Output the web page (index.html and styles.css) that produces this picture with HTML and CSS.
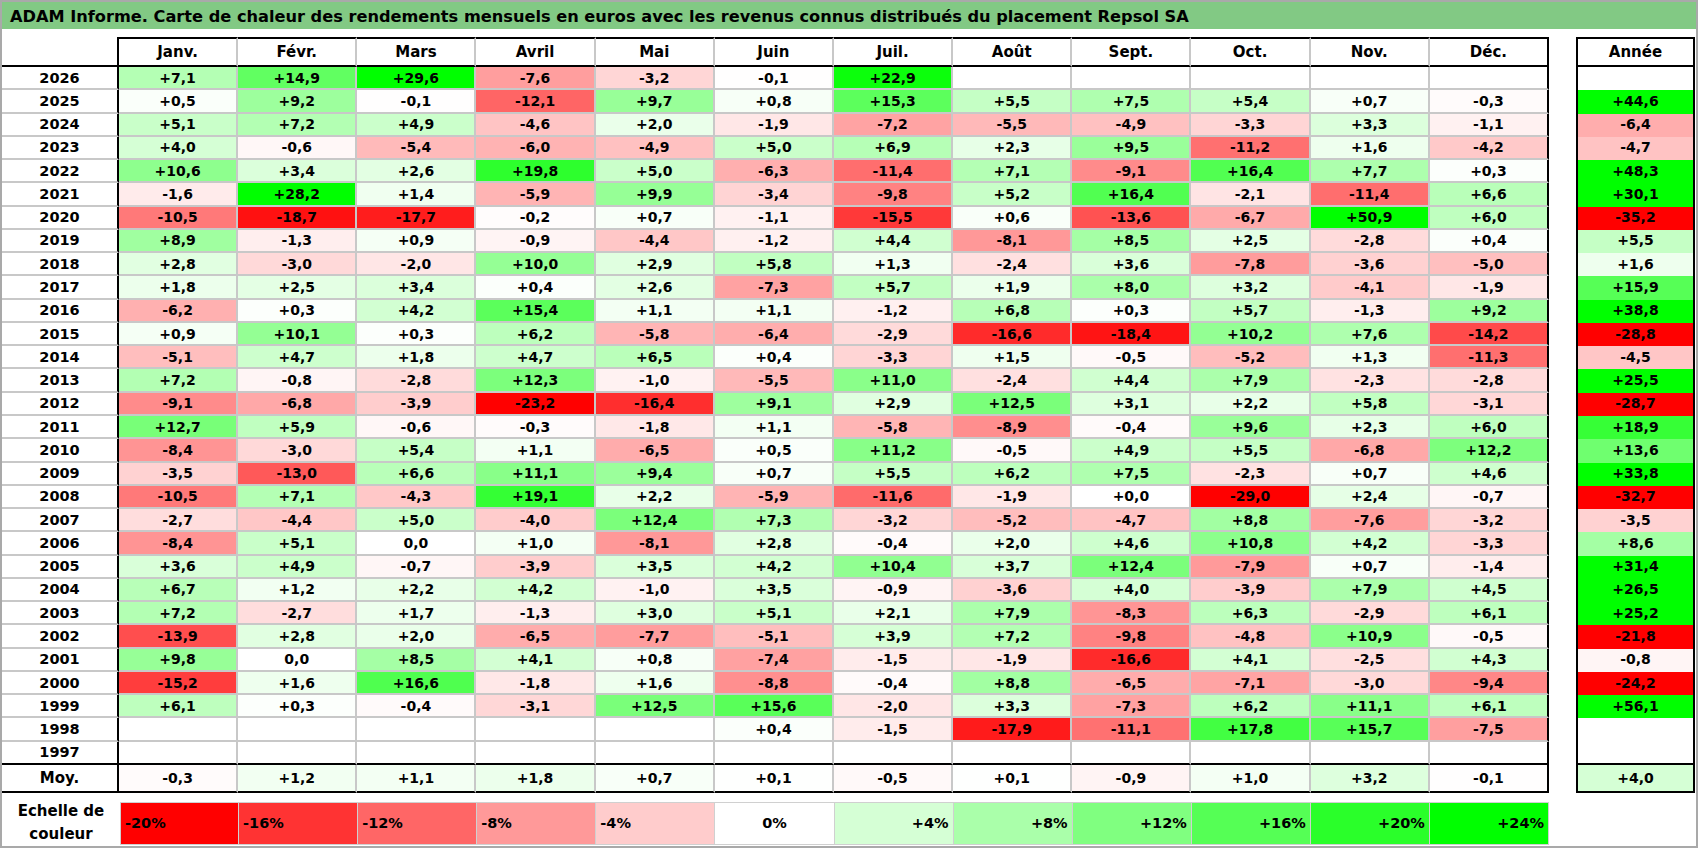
FILE: index.html
```html
<!DOCTYPE html>
<html lang="fr">
<head>
<meta charset="utf-8">
<title>ADAM Informe - Repsol SA</title>
<link rel="stylesheet" href="styles.css">
</head>
<body>
<div class="frame">
  <div class="title">ADAM Informe. Carte de chaleur des rendements mensuels en euros avec les revenus connus distribués du placement Repsol SA</div>
  <div class="main">
    <div class="table" id="tbl"></div>
    <div class="yearcol" id="ycol"></div>
  </div>
  <div class="scale">
    <div class="scale-label">Echelle de<br>couleur</div>
    <div class="scale-cells" id="scale"></div>
  </div>
</div>
<script src="script.js"></script>
</body>
</html>
```

FILE: styles.css
```css
* { box-sizing: border-box; }
html, body { margin: 0; padding: 0; background: #fff; }
body {
  font-family: "DejaVu Sans", "Verdana", sans-serif;
  font-weight: bold;
  color: #000;
}
.frame {
  width: 1698px;
  height: 848px;
  border: 2px solid #a9a9a9;
  display: flex;
  flex-direction: column;
  overflow: hidden;
}
.title {
  height: 27px;
  background: #82c984;
  font-size: 16.2px;
  line-height: 22px;
  padding: 4px 0 0 8px;
  white-space: nowrap;
}
.main {
  display: flex;
  margin-top: 8px;
}
.table {
  width: 1547px;
  display: grid;
  grid-template-columns: 117px repeat(12, 1fr);
  grid-template-rows: 30px repeat(30, 23.27px) 28px;
}
.yearcol {
  margin-left: 27px;
  width: 119px;
  display: grid;
  grid-template-rows: 30px repeat(30, 23.27px) 28px;
  border-left: 2px solid #000;
  border-right: 2px solid #000;
}
.c {
  display: flex;
  align-items: center;
  justify-content: center;
  font-size: 14px;
  border-right: 2px solid #c8c8c8;
  border-bottom: 2px solid #c8c8c8;
  white-space: nowrap;
}
.c.yl { border-right-color: #000; font-size: 14.5px; }
.c.hd { border-top: 2px solid #000; border-bottom-color: #000; font-size: 15px; }
.c.hd0 { border-bottom-color: #000; border-right-color: #000; }
.c.last { border-right-color: #000; }
.c.endrow { border-bottom-color: #000; }
.c.moy { border-bottom-color: #000; }
.c.moylabel { font-size: 15px; }
.c.inv { color: #fff; }
.y {
  display: flex;
  align-items: center;
  justify-content: center;
  font-size: 14px;
  padding-bottom: 2px;
}
.y.hd { border-top: 2px solid #000; border-bottom: 2px solid #000; padding-bottom: 0; font-size: 15px; }
.y.endrow { border-bottom: 2px solid #000; padding-bottom: 0; }
.y.moy { border-bottom: 2px solid #000; padding-bottom: 0; }
.scale {
  display: flex;
  margin-top: 9px;
  height: 43px;
}
.scale-label {
  width: 118px;
  font-size: 15px;
  line-height: 23px;
  text-align: center;
  display: flex;
  align-items: center;
  justify-content: center;
}
.scale-cells {
  width: 1429px;
  display: grid;
  grid-template-columns: repeat(12, 1fr);
}
.s {
  display: flex;
  align-items: center;
  padding: 0 4px;
  font-size: 14.5px;
  border: 1px solid #d0d0d0;
  border-left: none;
}
.s:first-child { border-left: 1px solid #d0d0d0; }
.s.neg { justify-content: flex-start; }
.s.zero { justify-content: center; }
.s.pos { justify-content: flex-end; }
```

FILE: script.js
```js
(function () {
  var months = ["Janv.", "Févr.", "Mars", "Avril", "Mai", "Juin", "Juil.", "Août", "Sept.", "Oct.", "Nov.", "Déc."];
  var rows = [
    ["2026", "+7,1 +14,9 +29,6 -7,6 -3,2 -0,1 +22,9 _ _ _ _ _", "_"],
    ["2025", "+0,5 +9,2 -0,1 -12,1 +9,7 +0,8 +15,3 +5,5 +7,5 +5,4 +0,7 -0,3", "+44,6"],
    ["2024", "+5,1 +7,2 +4,9 -4,6 +2,0 -1,9 -7,2 -5,5 -4,9 -3,3 +3,3 -1,1", "-6,4"],
    ["2023", "+4,0 -0,6 -5,4 -6,0 -4,9 +5,0 +6,9 +2,3 +9,5 -11,2 +1,6 -4,2", "-4,7"],
    ["2022", "+10,6 +3,4 +2,6 +19,8 +5,0 -6,3 -11,4 +7,1 -9,1 +16,4 +7,7 +0,3", "+48,3"],
    ["2021", "-1,6 +28,2 +1,4 -5,9 +9,9 -3,4 -9,8 +5,2 +16,4 -2,1 -11,4 +6,6", "+30,1"],
    ["2020", "-10,5 -18,7 -17,7 -0,2 +0,7 -1,1 -15,5 +0,6 -13,6 -6,7 +50,9 +6,0", "-35,2"],
    ["2019", "+8,9 -1,3 +0,9 -0,9 -4,4 -1,2 +4,4 -8,1 +8,5 +2,5 -2,8 +0,4", "+5,5"],
    ["2018", "+2,8 -3,0 -2,0 +10,0 +2,9 +5,8 +1,3 -2,4 +3,6 -7,8 -3,6 -5,0", "+1,6"],
    ["2017", "+1,8 +2,5 +3,4 +0,4 +2,6 -7,3 +5,7 +1,9 +8,0 +3,2 -4,1 -1,9", "+15,9"],
    ["2016", "-6,2 +0,3 +4,2 +15,4 +1,1 +1,1 -1,2 +6,8 +0,3 +5,7 -1,3 +9,2", "+38,8"],
    ["2015", "+0,9 +10,1 +0,3 +6,2 -5,8 -6,4 -2,9 -16,6 -18,4 +10,2 +7,6 -14,2", "-28,8"],
    ["2014", "-5,1 +4,7 +1,8 +4,7 +6,5 +0,4 -3,3 +1,5 -0,5 -5,2 +1,3 -11,3", "-4,5"],
    ["2013", "+7,2 -0,8 -2,8 +12,3 -1,0 -5,5 +11,0 -2,4 +4,4 +7,9 -2,3 -2,8", "+25,5"],
    ["2012", "-9,1 -6,8 -3,9 -23,2 -16,4 +9,1 +2,9 +12,5 +3,1 +2,2 +5,8 -3,1", "-28,7"],
    ["2011", "+12,7 +5,9 -0,6 -0,3 -1,8 +1,1 -5,8 -8,9 -0,4 +9,6 +2,3 +6,0", "+18,9"],
    ["2010", "-8,4 -3,0 +5,4 +1,1 -6,5 +0,5 +11,2 -0,5 +4,9 +5,5 -6,8 +12,2", "+13,6"],
    ["2009", "-3,5 -13,0 +6,6 +11,1 +9,4 +0,7 +5,5 +6,2 +7,5 -2,3 +0,7 +4,6", "+33,8"],
    ["2008", "-10,5 +7,1 -4,3 +19,1 +2,2 -5,9 -11,6 -1,9 +0,0 -29,0 +2,4 -0,7", "-32,7"],
    ["2007", "-2,7 -4,4 +5,0 -4,0 +12,4 +7,3 -3,2 -5,2 -4,7 +8,8 -7,6 -3,2", "-3,5"],
    ["2006", "-8,4 +5,1 0,0 +1,0 -8,1 +2,8 -0,4 +2,0 +4,6 +10,8 +4,2 -3,3", "+8,6"],
    ["2005", "+3,6 +4,9 -0,7 -3,9 +3,5 +4,2 +10,4 +3,7 +12,4 -7,9 +0,7 -1,4", "+31,4"],
    ["2004", "+6,7 +1,2 +2,2 +4,2 -1,0 +3,5 -0,9 -3,6 +4,0 -3,9 +7,9 +4,5", "+26,5"],
    ["2003", "+7,2 -2,7 +1,7 -1,3 +3,0 +5,1 +2,1 +7,9 -8,3 +6,3 -2,9 +6,1", "+25,2"],
    ["2002", "-13,9 +2,8 +2,0 -6,5 -7,7 -5,1 +3,9 +7,2 -9,8 -4,8 +10,9 -0,5", "-21,8"],
    ["2001", "+9,8 0,0 +8,5 +4,1 +0,8 -7,4 -1,5 -1,9 -16,6 +4,1 -2,5 +4,3", "-0,8"],
    ["2000", "-15,2 +1,6 +16,6 -1,8 +1,6 -8,8 -0,4 +8,8 -6,5 -7,1 -3,0 -9,4", "-24,2"],
    ["1999", "+6,1 +0,3 -0,4 -3,1 +12,5 +15,6 -2,0 +3,3 -7,3 +6,2 +11,1 +6,1", "+56,1"],
    ["1998", "_ _ _ _ _ +0,4 -1,5 -17,9 -11,1 +17,8 +15,7 -7,5", "_"],
    ["1997", "_ _ _ _ _ _ _ _ _ _ _ _", "_"]
  ];
  var moy = "-0,3 +1,2 +1,1 +1,8 +0,7 +0,1 -0,5 +0,1 -0,9 +1,0 +3,2 -0,1";
  var moyYear = "+4,0";

  function colour(v) {
    var t, c;
    if (v >= 0) {
      t = Math.min(v / 24, 1);
      c = Math.round(255 * (1 - t));
      return "rgb(" + c + ",255," + c + ")";
    }
    t = Math.min(-v / 20, 1);
    c = Math.round(255 * (1 - t));
    return "rgb(255," + c + "," + c + ")";
  }

  function make(parent, text, cls, bg) {
    var d = document.createElement("div");
    d.className = cls;
    d.textContent = text;
    if (bg) d.style.background = bg;
    parent.appendChild(d);
    return d;
  }

  function valueCell(parent, s, cls) {
    if (s === "_") { make(parent, "", cls); return; }
    var v = parseFloat(s.replace(",", "."));
    if (v <= -25 && cls.indexOf("c ") === 0) cls += " inv";
    make(parent, s, cls, colour(v));
  }

  var tbl = document.getElementById("tbl");
  var ycol = document.getElementById("ycol");

  make(tbl, "", "c hd0");
  months.forEach(function (m, i) { make(tbl, m, "c hd" + (i === 11 ? " last" : "")); });
  make(ycol, "Année", "y hd");

  rows.forEach(function (r, ri) {
    var end = ri === rows.length - 1 ? " endrow" : "";
    make(tbl, r[0], "c yl" + end);
    r[1].split(" ").forEach(function (s, i) {
      valueCell(tbl, s, "c" + (i === 11 ? " last" : "") + end);
    });
    valueCell(ycol, r[2], "y" + end);
  });

  make(tbl, "Moy.", "c yl moy moylabel");
  moy.split(" ").forEach(function (s, i) {
    valueCell(tbl, s, "c moy" + (i === 11 ? " last" : ""));
  });
  valueCell(ycol, moyYear, "y moy");

  var scale = document.getElementById("scale");
  [-20, -16, -12, -8, -4, 0, 4, 8, 12, 16, 20, 24].forEach(function (v) {
    var label = (v > 0 ? "+" : "") + v + "%";
    var cls = "s " + (v < 0 ? "neg" : v === 0 ? "zero" : "pos");
    make(scale, label, cls, colour(v));
  });
})();
```
